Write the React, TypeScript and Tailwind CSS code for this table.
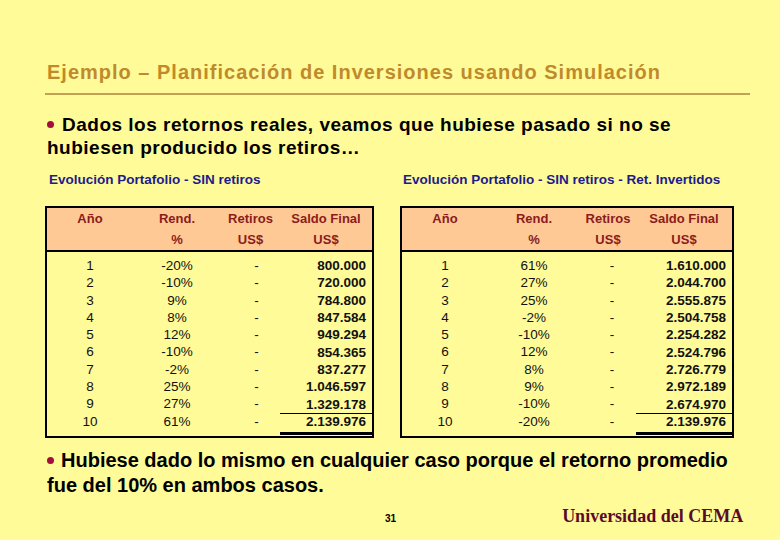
const left = [
  ["1", "-20%", "800.000"],
  ["2", "-10%", "720.000"],
  ["3", "9%", "784.800"],
  ["4", "8%", "847.584"],
  ["5", "12%", "949.294"],
  ["6", "-10%", "854.365"],
  ["7", "-2%", "837.277"],
  ["8", "25%", "1.046.597"],
  ["9", "27%", "1.329.178"],
  ["10", "61%", "2.139.976"],
];

const right = [
  ["1", "61%", "1.610.000"],
  ["2", "27%", "2.044.700"],
  ["3", "25%", "2.555.875"],
  ["4", "-2%", "2.504.758"],
  ["5", "-10%", "2.254.282"],
  ["6", "12%", "2.524.796"],
  ["7", "8%", "2.726.779"],
  ["8", "9%", "2.972.189"],
  ["9", "-10%", "2.674.970"],
  ["10", "-20%", "2.139.976"],
];

function Table({ rows, cols, dashShift }: { rows: string[][]; cols: string; dashShift: string }) {
  return (
    <div className="border-2 border-black">
      <div className="bg-[#ffc996] border-b-2 border-black text-[13px] font-bold text-[#8a1c1c]">
        <div className={`grid ${cols} h-[22px] items-center text-center`}>
          <span>Año</span>
          <span>Rend.</span>
          <span>Retiros</span>
          <span>Saldo Final</span>
        </div>
        <div className={`grid ${cols} h-[20px] items-center text-center`}>
          <span></span>
          <span>%</span>
          <span>US$</span>
          <span>US$</span>
        </div>
      </div>
      <div className="pt-[4px] pb-[1px] text-[13.5px] text-[#111]">
        {rows.map((r, i) => (
          <div key={i} className={`grid ${cols} h-[17.3px] items-center`}>
            <span className="text-center">{r[0]}</span>
            <span className="text-center">{r[1]}</span>
            <span className={`text-center ${dashShift}`}>-</span>
            <span
              className={`text-right font-bold pr-[6px] leading-[16px] ${
                i === 9 ? "border-t border-black" : ""
              }`}
            >
              {r[2]}
            </span>
          </div>
        ))}
        <div className={`grid ${cols} mt-[3px]`}>
          <span></span>
          <span></span>
          <span></span>
          <span className="h-[3px] bg-black"></span>
        </div>
      </div>
    </div>
  );
}

export default function App() {
  return (
    <div className="w-[780px] h-[540px] bg-[#fffb99] font-['Liberation_Sans',Arial,sans-serif] text-black overflow-hidden">
      <div className="pl-[47px] pt-[61px]">
        <h1 className="text-[20px] leading-[23px] font-bold tracking-[1px] text-[#c08a2c]">
          Ejemplo – Planificación de Inversiones usando Simulación
        </h1>
      </div>
      <div className="ml-[45px] w-[705px] h-[2px] bg-[#c4a052] mt-[9px]"></div>

      <p className="pl-[47px] w-[710px] mt-[18px] text-[19px] leading-[23px] font-bold tracking-[0.5px]">
        <span className="inline-block w-[7px] h-[7px] rounded-full bg-[#a0103a] mr-[8px] align-middle relative -top-[1px]"></span>
        Dados los retornos reales, veamos que hubiese pasado si no se hubiesen producido los retiros…
      </p>

      <div className="flex ml-[45px] mt-[13px] gap-[26px]">
        <div className="w-[329px]">
          <div className="pl-[4px] text-[13.5px] leading-[16px] font-bold text-[#1c1c8c] h-[34px]">
            Evolución Portafolio - SIN retiros
          </div>
          <Table rows={left} cols="grid-cols-[86px_88px_59px_1fr]" dashShift="pl-[12px]" />
        </div>
        <div className="w-[334px]">
          <div className="pl-[3px] text-[13.5px] leading-[16px] font-bold text-[#1c1c8c] h-[34px]">
            Evolución Portafolio - SIN retiros - Ret. Invertidos
          </div>
          <Table rows={right} cols="grid-cols-[86px_92px_56px_1fr]" dashShift="pl-[8px]" />
        </div>
      </div>

      <p className="pl-[47px] w-[740px] mt-[10px] text-[20px] leading-[25px] font-bold">
        <span className="inline-block w-[7px] h-[7px] rounded-full bg-[#a0103a] mr-[7px] align-middle relative -top-[1px]"></span>
        Hubiese dado lo mismo en cualquier caso porque el retorno promedio fue del 10% en ambos casos.
      </p>

      <div className="flex items-end mt-[8px]">
        <span className="ml-[385px] text-[10px] font-bold leading-[12px] mb-[1px]">31</span>
        <span className="ml-[166px] text-[18px] font-bold text-[#5c0a2a] font-['Liberation_Serif','Times_New_Roman',serif] leading-[20px]">
          Universidad del CEMA
        </span>
      </div>
    </div>
  );
}
